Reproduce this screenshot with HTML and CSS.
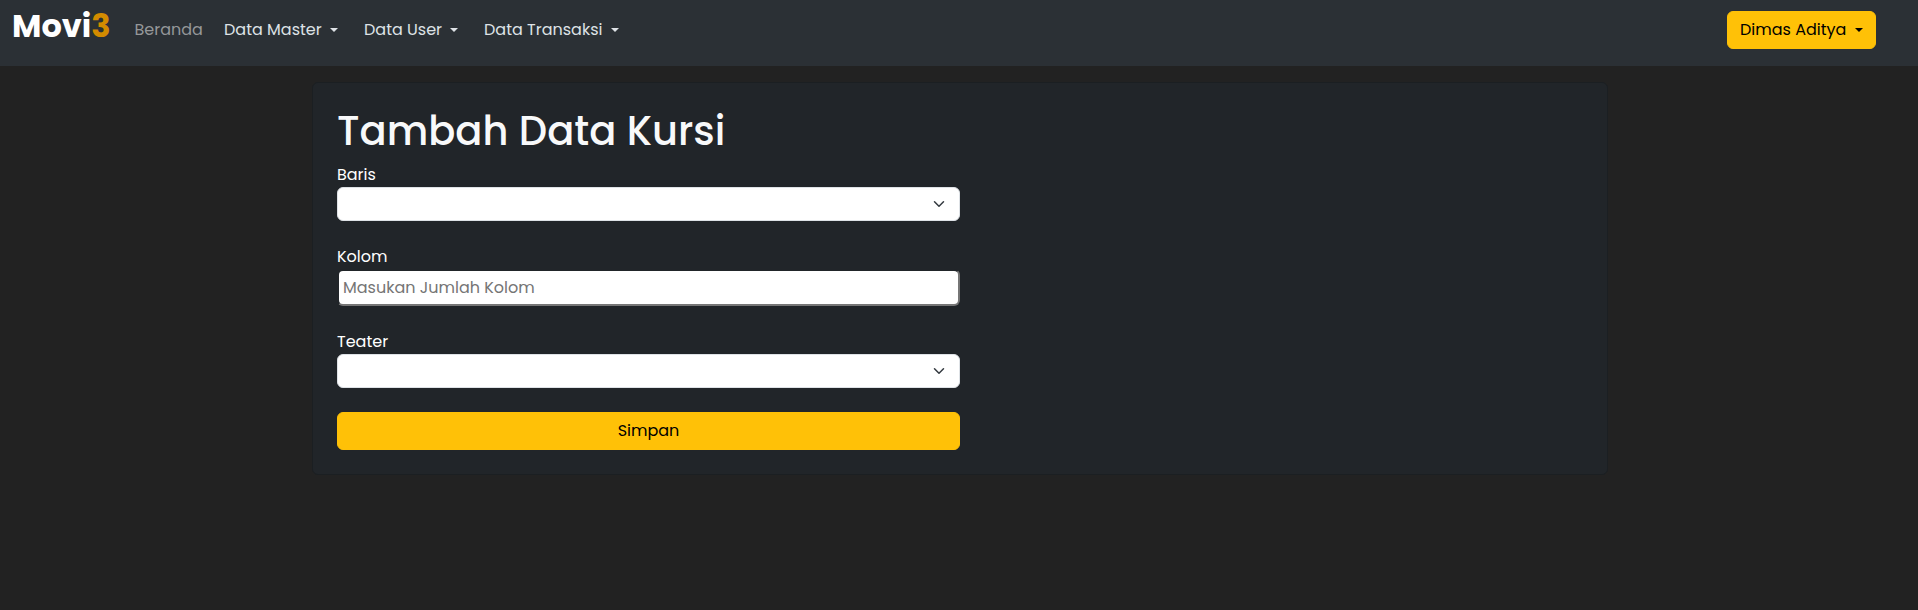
FILE: index.html
```html
<!DOCTYPE html>
<html lang="id">
<head>
<meta charset="utf-8">
<title>Tambah Data Kursi</title>
<link rel="stylesheet" href="styles.css">
</head>
<body>
<nav class="navbar">
  <a class="brand">Movi<span class="brand-accent">3</span></a>
  <div class="nav-links">
    <a class="nav-link muted">Beranda</a>
    <a class="nav-link master">Data Master<i class="caret"></i></a>
    <a class="nav-link user">Data User<i class="caret"></i></a>
    <a class="nav-link transaksi">Data Transaksi<i class="caret"></i></a>
  </div>
  <button class="btn account">Dimas Aditya<i class="caret"></i></button>
</nav>
<main class="card">
  <h1 class="title">Tambah Data Kursi</h1>
  <form class="form">
    <div class="field">
      <label class="label">Baris</label>
      <div class="select"><svg class="chevron" viewBox="0 0 16 16"><path d="m2 5 6 6 6-6"/></svg></div>
    </div>
    <div class="field">
      <label class="label">Kolom</label>
      <input class="input" placeholder="Masukan Jumlah Kolom">
    </div>
    <div class="field">
      <label class="label">Teater</label>
      <div class="select"><svg class="chevron" viewBox="0 0 16 16"><path d="m2 5 6 6 6-6"/></svg></div>
    </div>
    <button class="btn submit" type="button">Simpan</button>
  </form>
</main>
</body>
</html>
```
FILE: styles.css
```css
* { box-sizing: border-box; }
body {
  margin: 0;
  min-height: 610px;
  background: #222222;
  color: #fff;
  font: 400 16px/24px Poppins, Inter, sans-serif;
}
.navbar {
  display: flex;
  align-items: flex-start;
  height: 66px;
  padding: 0 42px 0 12px;
  background: #2b3035;
}
.brand {
  width: 98px;
  margin-top: 2px;
  font-size: 32px;
  font-weight: 700;
  line-height: 48px;
  white-space: nowrap;
}
.brand-accent { color: #d38b00; }
.nav-links { display: flex; flex: 1; padding: 18px 0 0 24px; }
.nav-link {
  display: flex;
  justify-content: space-between;
  margin-right: 21px;
  color: #dee2e6;
  white-space: nowrap;
}
.nav-link.muted { width: 69px; padding-left: 0.5px; color: #959799; }
.nav-link.master { width: 114px; margin-right: 26px; }
.nav-link.user { width: 94px; margin-right: 26px; }
.nav-link.transaksi { width: 135px; }
.caret {
  width: 8px;
  height: 4px;
  margin-top: 10px;
  border: 4px solid transparent;
  border-top-color: currentColor;
  border-bottom: 0;
}
.btn {
  height: 38px;
  padding: 6px 12px;
  border: 1px solid #ffc107;
  border-radius: 6px;
  background: #ffc107;
  color: #000;
  font: inherit;
}
.account {
  display: flex;
  justify-content: space-between;
  width: 149px;
  margin-top: 11px;
  white-space: nowrap;
}
.card {
  width: 1296px;
  height: 393px;
  margin: 16px 0 0 312px;
  padding: 24px;
  border: 1px solid #1b1f22;
  border-radius: 6px;
  background: #212529;
}
.title {
  margin: 0 0 8px;
  color: #f8f9fa;
  font-size: 40px;
  font-weight: 500;
  line-height: 48px;
  white-space: nowrap;
}
.form { display: flex; flex-direction: column; gap: 24px; width: 50%; }
.field { display: flex; flex-direction: column; align-items: flex-start; }
.select {
  display: flex;
  align-items: center;
  justify-content: flex-end;
  width: 100%;
  height: 34px;
  padding-right: 14px;
  border: 1px solid #dee2e6;
  border-radius: 6px;
  background: #fff;
}
.chevron {
  width: 12px;
  height: 12px;
  fill: none;
  stroke: #343a40;
  stroke-width: 2;
  stroke-linecap: round;
  stroke-linejoin: round;
}
.input {
  width: 100%;
  height: 37px;
  padding: 1px 4px;
  border: 2px solid #767676;
  border-top-color: #212529;
  border-left-color: #212529;
  border-radius: 6px;
  background: #fff;
  font: inherit;
}
.input::placeholder { color: #757575; }
```
